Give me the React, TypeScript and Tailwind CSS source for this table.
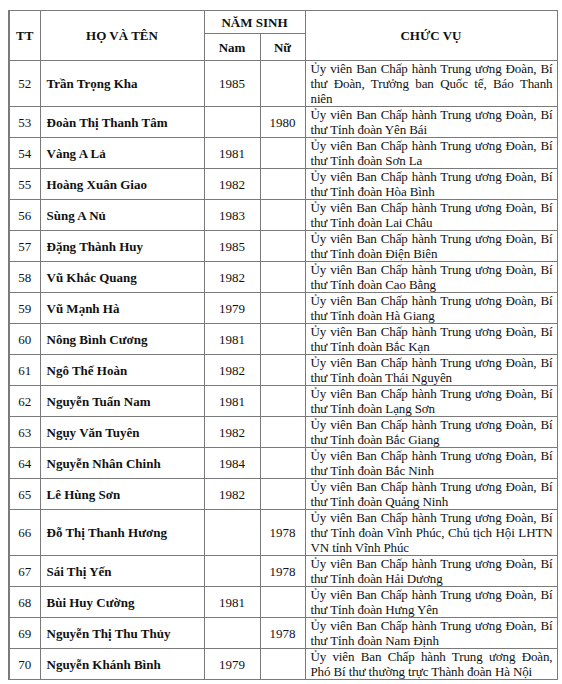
import React from 'react';

type Row = {
  tt: number;
  name: string;
  nam?: string;
  nu?: string;
  role: string;
};

const rows: Row[] = [
  { tt: 52, name: 'Trần Trọng Kha', nam: '1985', role: 'Ủy viên Ban Chấp hành Trung ương Đoàn, Bí thư Đoàn, Trưởng ban Quốc tế, Báo Thanh niên' },
  { tt: 53, name: 'Đoàn Thị Thanh Tâm', nu: '1980', role: 'Ủy viên Ban Chấp hành Trung ương Đoàn, Bí thư Tỉnh đoàn Yên Bái' },
  { tt: 54, name: 'Vàng A Lả', nam: '1981', role: 'Ủy viên Ban Chấp hành Trung ương Đoàn, Bí thư Tỉnh đoàn Sơn La' },
  { tt: 55, name: 'Hoàng Xuân Giao', nam: '1982', role: 'Ủy viên Ban Chấp hành Trung ương Đoàn, Bí thư Tỉnh đoàn Hòa Bình' },
  { tt: 56, name: 'Sùng A Nủ', nam: '1983', role: 'Ủy viên Ban Chấp hành Trung ương Đoàn, Bí thư Tỉnh đoàn Lai Châu' },
  { tt: 57, name: 'Đặng Thành Huy', nam: '1985', role: 'Ủy viên Ban Chấp hành Trung ương Đoàn, Bí thư Tỉnh đoàn Điện Biên' },
  { tt: 58, name: 'Vũ Khắc Quang', nam: '1982', role: 'Ủy viên Ban Chấp hành Trung ương Đoàn, Bí thư Tỉnh đoàn Cao Bằng' },
  { tt: 59, name: 'Vũ Mạnh Hà', nam: '1979', role: 'Ủy viên Ban Chấp hành Trung ương Đoàn, Bí thư Tỉnh đoàn Hà Giang' },
  { tt: 60, name: 'Nông Bình Cương', nam: '1981', role: 'Ủy viên Ban Chấp hành Trung ương Đoàn, Bí thư Tỉnh đoàn Bắc Kạn' },
  { tt: 61, name: 'Ngô Thế Hoàn', nam: '1982', role: 'Ủy viên Ban Chấp hành Trung ương Đoàn, Bí thư Tỉnh đoàn Thái Nguyên' },
  { tt: 62, name: 'Nguyễn Tuấn Nam', nam: '1981', role: 'Ủy viên Ban Chấp hành Trung ương Đoàn, Bí thư Tỉnh đoàn Lạng Sơn' },
  { tt: 63, name: 'Ngụy Văn Tuyên', nam: '1982', role: 'Ủy viên Ban Chấp hành Trung ương Đoàn, Bí thư Tỉnh đoàn Bắc Giang' },
  { tt: 64, name: 'Nguyễn Nhân Chinh', nam: '1984', role: 'Ủy viên Ban Chấp hành Trung ương Đoàn, Bí thư Tỉnh đoàn Bắc Ninh' },
  { tt: 65, name: 'Lê Hùng Sơn', nam: '1982', role: 'Ủy viên Ban Chấp hành Trung ương Đoàn, Bí thư Tỉnh đoàn Quảng Ninh' },
  { tt: 66, name: 'Đỗ Thị Thanh Hương', nu: '1978', role: 'Ủy viên Ban Chấp hành Trung ương Đoàn, Bí thư Tỉnh đoàn Vĩnh Phúc, Chủ tịch Hội LHTN VN tỉnh Vĩnh Phúc' },
  { tt: 67, name: 'Sái Thị Yến', nu: '1978', role: 'Ủy viên Ban Chấp hành Trung ương Đoàn, Bí thư Tỉnh đoàn Hải Dương' },
  { tt: 68, name: 'Bùi Huy Cường', nam: '1981', role: 'Ủy viên Ban Chấp hành Trung ương Đoàn, Bí thư Tỉnh đoàn Hưng Yên' },
  { tt: 69, name: 'Nguyễn Thị Thu Thủy', nu: '1978', role: 'Ủy viên Ban Chấp hành Trung ương Đoàn, Bí thư Tỉnh đoàn Nam Định' },
  { tt: 70, name: 'Nguyễn Khánh Bình', nam: '1979', role: 'Ủy viên Ban Chấp hành Trung ương Đoàn, Phó Bí thư thường trực Thành đoàn Hà Nội' },
];

const cell = 'border border-[#7a7a7a] p-0 align-middle';

export default function App() {
  return (
    <div className="min-h-screen bg-white pl-[8px] pt-[10px] font-['Liberation_Serif',serif] text-[13px] leading-[15px] text-[#111]">
      <table className="w-[548px] table-fixed border-collapse">
        <colgroup>
          <col className="w-[31px]" />
          <col className="w-[164px]" />
          <col className="w-[56px]" />
          <col className="w-[45px]" />
          <col className="w-[252px]" />
        </colgroup>
        <thead>
          <tr className="h-[23px]">
            <th rowSpan={2} className={`${cell} border-l-2 text-center font-bold`}>TT</th>
            <th rowSpan={2} className={`${cell} text-center font-bold`}>HỌ VÀ TÊN</th>
            <th colSpan={2} className={`${cell} text-center font-bold`}>NĂM SINH</th>
            <th rowSpan={2} className={`${cell} text-center font-bold`}>CHỨC VỤ</th>
          </tr>
          <tr className="h-[27px]">
            <th className={`${cell} text-center font-bold`}>Nam</th>
            <th className={`${cell} text-center font-bold`}>Nữ</th>
          </tr>
        </thead>
        <tbody>
          {rows.map((r) => (
            <tr key={r.tt}>
              <td className={`${cell} border-l-2 text-center`}>{r.tt}</td>
              <td className={`${cell} pl-[6px] font-bold`}>{r.name}</td>
              <td className={`${cell} text-center`}>{r.nam ?? ''}</td>
              <td className={`${cell} text-center`}>{r.nu ?? ''}</td>
              <td className={`${cell} pl-[5px] pr-[4px] text-justify leading-[15px] tracking-[-0.12px]`}>{r.role}</td>
            </tr>
          ))}
        </tbody>
      </table>
    </div>
  );
}
